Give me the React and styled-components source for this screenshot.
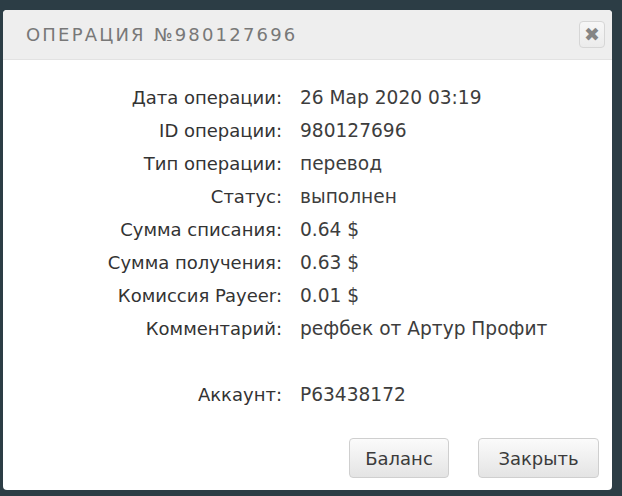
import React from "react";
import styled, { createGlobalStyle } from "styled-components";

const Global = createGlobalStyle`
  html, body { margin: 0; padding: 0; }
  body {
    background: #2c3d45;
    width: 622px;
    height: 496px;
    overflow: hidden;
    font-family: "DejaVu Sans", sans-serif;
  }
`;

const Page = styled.div`
  padding: 10px 10px 6px 3px;
  box-sizing: border-box;
  width: 622px;
  height: 496px;
`;

const Modal = styled.div`
  width: 609px;
  height: 480px;
  background: #fff;
  border-radius: 4px;
  overflow: hidden;
  display: flex;
  flex-direction: column;
`;

const Header = styled.div`
  height: 50px;
  box-sizing: border-box;
  background: #eeeeee;
  border-bottom: 1px solid #e2e2e2;
  display: flex;
  align-items: center;
  justify-content: space-between;
  padding: 0 7px 0 23px;
`;

const Title = styled.h1`
  margin: 0;
  font-family: "DejaVu Sans", sans-serif;
  font-weight: normal;
  font-size: 18px;
  letter-spacing: 2.2px;
  color: #787878;
  text-transform: uppercase;
`;

const CloseBtn = styled.button`
  width: 26px;
  height: 27px;
  padding: 0;
  border: 1px solid #d6d6d6;
  border-radius: 4px;
  background: linear-gradient(#f7f7f7, #ebebeb);
  color: #858585;
  font-family: "DejaVu Sans", sans-serif;
  font-weight: bold;
  font-size: 19px;
  line-height: 1;
  display: flex;
  align-items: center;
  justify-content: center;
`;

const Body = styled.div`
  flex: 1;
  padding-top: 21px;
  display: grid;
  grid-template-columns: 279px 1fr;
  grid-auto-rows: 33px;
  column-gap: 18px;
  align-content: start;
  font-size: 18px;
  color: #333;
`;

const Label = styled.div`
  text-align: right;
  line-height: 33px;
  white-space: nowrap;
`;

const Value = styled.div`
  line-height: 33px;
  white-space: nowrap;
  font-size: 18.6px;
  color: #3d3d3d;
`;

const Spacer = styled.div`
  grid-column: 1 / -1;
  height: 34px;
`;

const Footer = styled.div`
  display: flex;
  justify-content: flex-end;
  gap: 29px;
  padding: 0 13px 12px 0;
`;

const Button = styled.button`
  width: ${(p) => p.$w}px;
  height: 40px;
  border: 1px solid #cfcfcf;
  border-radius: 4px;
  background: linear-gradient(#fbfbfb, #e4e4e4);
  font-family: "DejaVu Sans", sans-serif;
  font-size: 18px;
  color: #3b3b3b;
  padding: 0;
`;

const rows = [
  ["Дата операции:", "26 Мар 2020 03:19"],
  ["ID операции:", "980127696"],
  ["Тип операции:", "перевод"],
  ["Статус:", "выполнен"],
  ["Сумма списания:", "0.64 $"],
  ["Сумма получения:", "0.63 $"],
  ["Комиссия Payeer:", "0.01 $"],
  ["Комментарий:", "рефбек от Артур Профит"],
];

export default function App() {
  return (
    <>
      <Global />
      <Page>
        <Modal>
          <Header>
            <Title>Операция №980127696</Title>
            <CloseBtn aria-label="close">✖</CloseBtn>
          </Header>
          <Body>
            {rows.map(([l, v]) => (
              <React.Fragment key={l}>
                <Label>{l}</Label>
                <Value>{v}</Value>
              </React.Fragment>
            ))}
            <Spacer />
            <Label>Аккаунт:</Label>
            <Value>P63438172</Value>
          </Body>
          <Footer>
            <Button $w={100}>Баланс</Button>
            <Button $w={121}>Закрыть</Button>
          </Footer>
        </Modal>
      </Page>
    </>
  );
}
